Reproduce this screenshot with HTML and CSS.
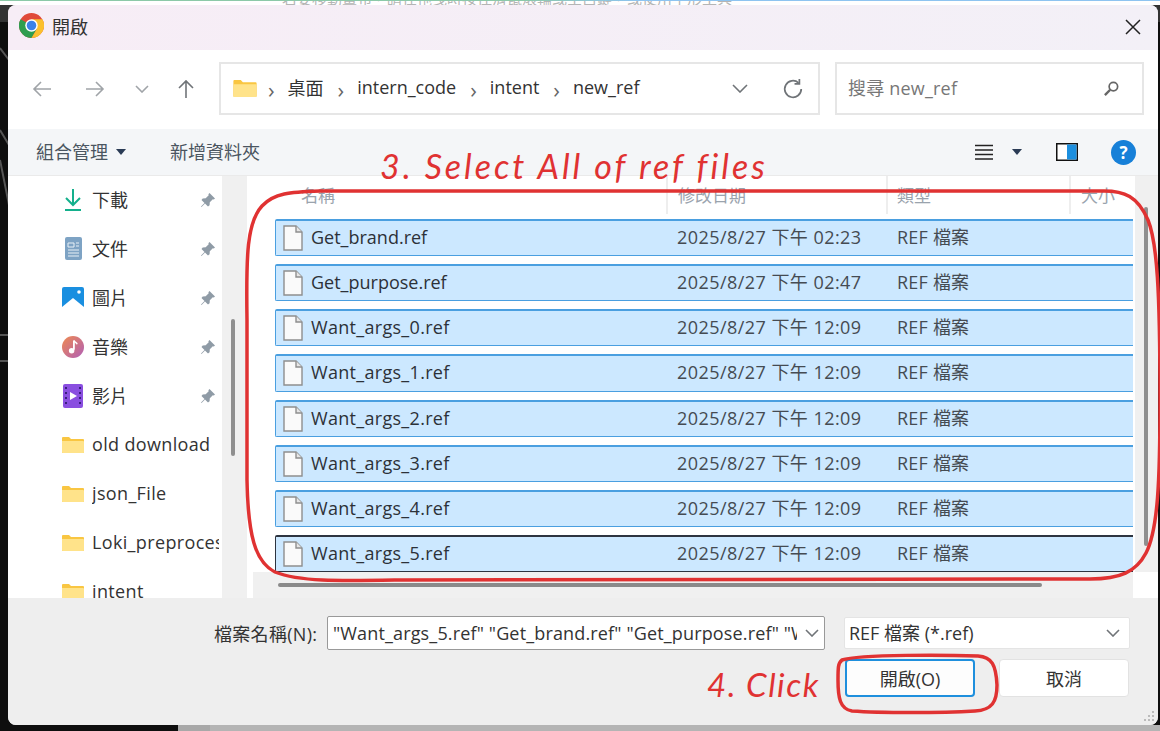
FILE: index.html
```html
<!DOCTYPE html>
<html lang="zh-Hant">
<head>
<meta charset="utf-8">
<title>開啟</title>
<link rel="stylesheet" href="styles.css">
</head>
<body>
<svg class="backdrop" viewBox="0 0 1160 731"><rect width="1160" height="22" fill="#333"/><path d="M0 48 9 60M0 130 9 145M0 160 9 205M0 335H9M0 361H9" stroke="#555" stroke-width="2" fill="none"/></svg>
<div class="desk-top"><span class="ghost">若要移動畫布，請在拖曳時按住滑鼠滾輪或空白鍵，或使用手形工具</span></div>
<main class="dialog">
  <header class="titlebar">
    <svg class="chrome" viewBox="0 0 24 24"><circle cx="12" cy="12" r="12" fill="#e04a3a"/><path d="M12 12 1.6 6A12 12 0 0 0 12 24l5.2-9z" fill="#2f9e4f"/><path d="M12 6h10.4A12 12 0 0 1 12 24l5.2-9z" fill="#fbc02d"/><circle cx="12" cy="12" r="6" fill="#fff"/><circle cx="12" cy="12" r="4.6" fill="#3b82e8"/></svg>
    <span class="title">開啟</span>
    <svg class="close" viewBox="0 0 16 16"><path d="M1 1 15 15M15 1 1 15" stroke="#222" stroke-width="1.5" fill="none"/></svg>
  </header>
  <section class="navbar">
    <div class="nav-btns">
      <svg class="nav" viewBox="0 0 20 20"><path d="M19 10H2M9 3l-7 7 7 7" class="ico-light"/></svg>
      <svg class="nav" viewBox="0 0 20 20"><path d="M1 10h17M11 3l7 7-7 7" class="ico-light"/></svg>
      <svg class="nav-small" viewBox="0 0 14 8"><path d="M1 1l6 6 6-6" class="ico-light"/></svg>
      <svg class="nav" viewBox="0 0 20 20"><path d="M10 19V2M3 9l7-7 7 7" class="ico-mid"/></svg>
    </div>
    <div class="address">
      <svg class="folder-big" viewBox="0 0 22 18"><use href="#folder"/></svg>
      <span class="sep">›</span><span class="crumb">桌面</span>
      <span class="sep">›</span><span class="crumb">intern_code</span>
      <span class="sep">›</span><span class="crumb">intent</span>
      <span class="sep">›</span><span class="crumb">new_ref</span>
      <svg class="addr-chev" viewBox="0 0 16 9"><path d="M1 1l7 7 7-7" class="ico-mid"/></svg>
      <svg class="refresh" viewBox="0 0 20 20"><path d="M17.5 10A7.5 7.5 0 1 1 15 4.4" class="ico-mid"/><path d="M15.8 1v4.4h-4.4" class="ico-mid"/></svg>
    </div>
    <div class="search">
      <span class="search-text">搜尋 new_ref</span>
      <svg class="magnifier" viewBox="0 0 18 18"><circle cx="11" cy="7" r="4.5" fill="none" stroke="#666" stroke-width="1.8"/><path d="M7.5 10.5 2 16" stroke="#666" stroke-width="2.4"/></svg>
    </div>
  </section>
  <section class="toolbar">
    <span class="tool">組合管理</span><span class="caret"></span>
    <span class="tool tool-new">新增資料夾</span>
    <div class="tool-right">
      <svg class="view" viewBox="0 0 18 16"><path d="M0 1.5h18M0 6h18M0 10.500h18M0 15h18" stroke="#222" stroke-width="1.3"/></svg>
      <span class="caret caret-blue"></span>
      <svg class="pane" viewBox="0 0 22 18"><rect x=".75" y=".75" width="20.500" height="16.500" fill="#fff" stroke="#111" stroke-width="1.5"/><rect x="11" y="1.500" width="9.500" height="15" fill="#1c8fdf"/></svg>
      <span class="help">?</span>
    </div>
  </section>
  <section class="browser">
    <aside class="sidebar">
      <div class="side-item">
        <svg class="side-ico" viewBox="0 0 22 24"><path d="M11 1v15M4 10l7 7 7-7" fill="none" stroke="#14b08c" stroke-width="2"/><path d="M3 22h16" stroke="#14b08c" stroke-width="2"/></svg>
        <span class="side-label">下載</span><svg class="pin" viewBox="0 0 16 16"><use href="#pin"/></svg>
      </div>
      <div class="side-item">
        <svg class="side-ico" viewBox="0 0 22 24"><rect x="3" y="0" width="17" height="23" rx="2" fill="#7ea3c4"/><path d="M6 6h6v4H6zM6 13h11M6 16h11M6 19h11M14 6h3M14 9h3" stroke="#e8f0f6" fill="none"/></svg>
        <span class="side-label">文件</span><svg class="pin" viewBox="0 0 16 16"><use href="#pin"/></svg>
      </div>
      <div class="side-item">
        <svg class="side-ico" viewBox="0 0 22 24"><rect y="1" width="22" height="22" rx="2" fill="#1a8fe0"/><path d="M0 21 11 12l11 9v2H0z" fill="#fff"/><circle cx="17" cy="6" r="1.800" fill="#fff"/></svg>
        <span class="side-label">圖片</span><svg class="pin" viewBox="0 0 16 16"><use href="#pin"/></svg>
      </div>
      <div class="side-item">
        <svg class="side-ico" viewBox="0 0 24 24"><defs><linearGradient id="music" x1="0" y1="0" x2="1" y2="1"><stop offset="0" stop-color="#ef8a50"/><stop offset="1" stop-color="#b05fb8"/></linearGradient></defs><circle cx="12" cy="12" r="12" fill="url(#music)"/><path d="M13 5v10" stroke="#fff" stroke-width="2"/><circle cx="10.500" cy="16" r="3" fill="#fff"/><path d="M13 5c1 2 3 2 3.500 4" stroke="#fff" stroke-width="1.500" fill="none"/></svg>
        <span class="side-label">音樂</span><svg class="pin" viewBox="0 0 16 16"><use href="#pin"/></svg>
      </div>
      <div class="side-item">
        <svg class="side-ico" viewBox="0 0 22 24"><rect x="1" y="0" width="20" height="24" rx="2" fill="#8a4fe0"/><path d="M8 8l7 4-7 4z" fill="#fff"/><path d="M4 3v18M18 3v18" stroke="#3a1f80" stroke-width="2" stroke-dasharray="2 3"/></svg>
        <span class="side-label">影片</span><svg class="pin" viewBox="0 0 16 16"><use href="#pin"/></svg>
      </div>
      <div class="side-item"><svg class="side-ico folder-ico" viewBox="0 0 22 18"><use href="#folder"/></svg><span class="side-label side-folder">old download</span></div>
      <div class="side-item"><svg class="side-ico folder-ico" viewBox="0 0 22 18"><use href="#folder"/></svg><span class="side-label side-folder">json_File</span></div>
      <div class="side-item"><svg class="side-ico folder-ico" viewBox="0 0 22 18"><use href="#folder"/></svg><span class="side-label side-folder">Loki_preprocessing</span></div>
      <div class="side-item"><svg class="side-ico folder-ico" viewBox="0 0 22 18"><use href="#folder"/></svg><span class="side-label side-folder">intent</span></div>
    </aside>
    <div class="side-scroll"><div class="side-thumb"></div></div>
    <div class="list">
      <div class="list-head">
        <span class="col col-name">名稱</span>
        <span class="col col-date">修改日期</span>
        <span class="col col-type">類型</span>
        <span class="col col-size">大小</span>
      </div>
      <div class="rows">
        <div class="row"><svg class="file" viewBox="0 0 20 26"><use href="#file"/></svg><span class="name">Get_brand.ref</span><span class="date">2025/8/27 下午 02:23</span><span class="type">REF 檔案</span></div>
        <div class="row"><svg class="file" viewBox="0 0 20 26"><use href="#file"/></svg><span class="name">Get_purpose.ref</span><span class="date">2025/8/27 下午 02:47</span><span class="type">REF 檔案</span></div>
        <div class="row"><svg class="file" viewBox="0 0 20 26"><use href="#file"/></svg><span class="name name-want">Want_args_0.ref</span><span class="date">2025/8/27 下午 12:09</span><span class="type">REF 檔案</span></div>
        <div class="row"><svg class="file" viewBox="0 0 20 26"><use href="#file"/></svg><span class="name name-want">Want_args_1.ref</span><span class="date">2025/8/27 下午 12:09</span><span class="type">REF 檔案</span></div>
        <div class="row"><svg class="file" viewBox="0 0 20 26"><use href="#file"/></svg><span class="name name-want">Want_args_2.ref</span><span class="date">2025/8/27 下午 12:09</span><span class="type">REF 檔案</span></div>
        <div class="row"><svg class="file" viewBox="0 0 20 26"><use href="#file"/></svg><span class="name name-want">Want_args_3.ref</span><span class="date">2025/8/27 下午 12:09</span><span class="type">REF 檔案</span></div>
        <div class="row"><svg class="file" viewBox="0 0 20 26"><use href="#file"/></svg><span class="name name-want">Want_args_4.ref</span><span class="date">2025/8/27 下午 12:09</span><span class="type">REF 檔案</span></div>
        <div class="row row-focus"><svg class="file" viewBox="0 0 20 26"><use href="#file"/></svg><span class="name name-want">Want_args_5.ref</span><span class="date">2025/8/27 下午 12:09</span><span class="type">REF 檔案</span></div>
      </div>
      <div class="hscroll"><div class="hthumb"></div></div>
    </div>
    <div class="vscroll"><div class="vtrack"><div class="vthumb"></div></div><div class="vcorner"></div></div>
  </section>
  <footer class="footer">
    <div class="file-line">
      <label class="file-label">檔案名稱(N):</label>
      <div class="file-input"><span class="file-value">"Want_args_5.ref" "Get_brand.ref" "Get_purpose.ref" "Want_args_0.ref"</span><svg class="chev" viewBox="0 0 14 8"><path d="M1 1l6 6 6-6" class="ico-mid"/></svg></div>
      <div class="type-select"><span>REF 檔案 (*.ref)</span><svg class="chev" viewBox="0 0 14 8"><path d="M1 1l6 6 6-6" class="ico-mid"/></svg></div>
    </div>
    <div class="btn-line">
      <button class="btn btn-primary">開啟(O)</button>
      <button class="btn btn-cancel">取消</button>
    </div>
    <svg class="grip" viewBox="0 0 14 14"><path d="M11 1h2v2h-2zM7 5h2v2H7zM11 5h2v2h-2zM3 9h2v2H3zM7 9h2v2H7zM11 9h2v2h-2z" fill="#bbb"/></svg>
  </footer>
</main>
<div class="desk-bottom"></div>

<svg class="annot-lines" viewBox="0 0 1160 731">
  <path d="M247 320C246 255 247 222 262 206C274 193 290 192 320 191L1100 191C1125 190 1138 197 1148 220C1157 242 1160 290 1160 400C1160 480 1158 530 1146 553C1136 572 1120 579 1090 579L400 580C340 581 300 582 275 572C255 562 248 535 247 480Z"/>
  <path d="M842 660C860 654 950 655 978 656C992 657 996 665 997 685C997 702 992 710 975 711C940 713 880 713 852 711C840 709 838 698 838 680C838 668 838 663 842 660Z"/>
</svg>
<div class="annot annot-select">3. Select All of ref files</div>
<div class="annot annot-click">4. Click</div>

<svg class="defs" width="0" height="0">
  <defs>
    <g id="folder"><path d="M0 2a1 1 0 0 1 1-1h6l2 2h12a1 1 0 0 1 1 1v12a1 1 0 0 1-1 1H1a1 1 0 0 1-1-1z" fill="#f9c642"/><path d="M0 5h21a1 1 0 0 1 1 1v10a1 1 0 0 1-1 1H1a1 1 0 0 1-1-1z" fill="#ffe38a"/></g>
    <path id="pin" d="M9.500 1 15 6.500l-1.200 1-1-.3-3 3-.2 3L8 14.500 5 11.500 1.500 15 1 14.500 4.500 11 1.500 8l1.200-1.600 3-.2 3-3-.3-1z" fill="#8f9ba6"/>
    <g id="file"><path d="M1 1h12l6 6v18H1z" fill="#fafafa" stroke="#8e8e8e" stroke-width="1.400"/><path d="M13 1v6h6" fill="#e6e6e6" stroke="#8e8e8e" stroke-width="1.400"/></g>
  </defs>
</svg>
</body>
</html>
```
FILE: styles.css
```css
* { box-sizing: border-box; }
html, body { margin: 0; height: 731px; overflow: hidden; }
body {
  position: relative;
  width: 1160px;
  background: #0e0e0e;
  font-family: "Open Sans", "Noto Sans CJK TC", "Noto Sans", sans-serif;
  font-size: 18px;
  color: #222;
  display: flex;
  flex-direction: column;
}
.backdrop { position: absolute; left: 0; top: 0; width: 1160px; height: 731px; }
.ico-light { fill: none; stroke: #a0a4a8; stroke-width: 1.6; }
.ico-mid { fill: none; stroke: #707478; stroke-width: 1.6; }

.desk-top {
  height: 5px;
  flex: none;
  position: relative;
  background: #fff;
  border-top: 1px solid #8cc9a8;
  border-image: linear-gradient(90deg, #8cc9a8 45%, #8ec4f0 55%) 1;
  overflow: hidden;
  text-align: center;
}
.ghost { display: block; margin: -13px 0 0 -146px; font-size: 15px; line-height: 20px; color: #b5b5b5; }

.dialog {
  flex: none;
  position: relative;
  margin-left: 8px;
  width: 1150px;
  height: 720px;
  background: #eee;
  border-radius: 8px;
  overflow: hidden;
  display: flex;
  flex-direction: column;
}
.desk-bottom {
  flex: 1;
  position: relative;
  margin-left: 178px;
  background: linear-gradient(90deg, #a8a8a8 32px, #b4b4b4 32px);
}

.titlebar {
  height: 45px;
  flex: none;
  display: flex;
  align-items: center;
  padding: 0 16px 4px 11px;
  background: linear-gradient(90deg, #f7edf6, #f3f0f7);
}
.chrome { width: 25px; height: 25px; }
.title { margin-left: 8px; font-size: 18px; color: #333; }
.close { width: 16px; height: 16px; margin: 2px 1px 0 auto; }

.navbar {
  height: 79px;
  flex: none;
  background: #fff;
  display: flex;
  align-items: flex-start;
  padding: 12px 0 0 24px;
}
.nav-btns { width: 187px; height: 53px; flex: none; display: flex; align-items: center; }
.nav { width: 20px; height: 20px; flex: none; }
.nav:nth-child(2) { margin-left: 33px; }
.nav:nth-child(4) { margin-left: 27px; }
.nav-small { width: 14px; height: 8px; margin-left: 30px; flex: none; }
.address, .search {
  height: 53px;
  flex: none;
  background: #fff;
  border: 2px solid #e6e6e6;
  display: flex;
  align-items: center;
}
.address { width: 601px; padding: 0 14px 0 12px; }
.folder-big { width: 24px; height: 19px; flex: none; margin-right: -3px; }
.sep { margin: 0 13px 0 14px; color: #666; font-size: 22px; line-height: 1; }
.crumb { font-size: 18px; color: #333; margin: 0 0 3px; }
.addr-chev { width: 16px; height: 9px; margin-left: auto; }
.refresh { width: 22px; height: 22px; margin-left: 34px; }
.search { width: 309px; margin-left: 15px; padding: 0 22px 0 11px; justify-content: space-between; }
.search-text { color: #777; margin-bottom: 3px; letter-spacing: .2px; }
.magnifier { width: 17px; height: 17px; }

.toolbar {
  height: 47px;
  flex: none;
  background: #f4f6f8;
  display: flex;
  align-items: center;
  padding: 0 22px 0 28px;
  border-bottom: 1px solid #eaeaea;
}
.tool { font-size: 18px; color: #4a5560; margin-bottom: 3px; }
.tool-new { margin-left: 44px; }
.caret { width: 0; height: 0; margin-left: 8px; border: 5px solid transparent; border-top: 6px solid #2a3b55; border-bottom: 0; }
.tool-right { margin-left: auto; display: flex; align-items: center; }
.view { width: 18px; height: 16px; }
.caret-blue { margin-left: 19px; }
.pane { width: 22px; height: 18px; margin-left: 34px; }
.help {
  width: 25px; height: 25px;
  margin-left: 33px;
  border-radius: 50%;
  background: #1780d8;
  color: #fff;
  font-weight: 700;
  font-size: 17px;
  line-height: 25px;
  text-align: center;
}

.browser { height: 422px; flex: none; display: flex; background: #fff; }
.sidebar { width: 214px; flex: none; background: #fff; overflow: hidden; }
.side-item { height: 49px; display: flex; align-items: center; padding-left: 54px; }
.side-item:first-child { margin-top: -1px; }
.side-ico { width: 22px; height: 24px; flex: none; }
.folder-ico { height: 18px; }
.side-label { margin: 0 0 2px 8px; font-size: 18px; color: #333; white-space: nowrap; }
.side-folder { letter-spacing: .35px; max-width: 127px; overflow: hidden; }
.pin { width: 16px; height: 16px; margin-left: auto; margin-right: 6px; flex: none; }
.side-scroll { width: 25px; flex: none; background: #f0f0f0; padding: 143px 0 0 9px; }
.side-thumb { width: 4px; height: 137px; background: #8f8f8f; border-radius: 2px; }

.list { width: 882px; margin-left: 6px; padding-right: 2px; flex: none; display: flex; flex-direction: column; }
.list-head {
  height: 38px;
  flex: none;
  display: flex;
  align-items: center;
  color: #9aa3ad;
  font-size: 17px;
}
.col { height: 100%; display: flex; align-items: center; border-right: 2px solid #eee; padding-bottom: 2px; }
.col-name { width: 415px; padding-left: 48px; }
.col-date { width: 220px; padding-left: 10px; }
.col-type { width: 183px; padding-left: 9px; }
.col-size { width: 62px; padding-left: 10px; border-right: 0; }
.rows { flex: 1; display: flex; flex-direction: column; gap: 8px; padding: 5px 0 0 22px; }
.row {
  height: 37.14px;
  flex: none;
  display: grid;
  grid-template-columns: 28px 366px 220px 1fr;
  align-items: center;
  background: #cce8ff;
  border: 1px solid #4a9fe0;
  border-width: 2px 0 1px 1px;
  border-radius: 2px 0 0 2px;
  padding-left: 7px;
}
.row-focus { border-color: #2d3440; }
.file { width: 20px; height: 26px; }
.name { color: #2c3138; margin-bottom: 2px; }
.name-want { letter-spacing: .3px; }
.date, .type { color: #454b52; margin-bottom: 4px; }
.date { letter-spacing: .45px; }
.type { letter-spacing: .2px; }
.hscroll { height: 26px; flex: none; background: #f0f0f0; padding: 11px 0 0 25px; }
.hthumb { width: 764px; height: 4px; background: #8a8a8a; border-radius: 2px; }
.vscroll { flex: 1; display: flex; flex-direction: column; }
.vtrack { flex: 1; background: #f0f0f0; padding: 31px 0 0 9px; }
.vcorner { height: 26px; flex: none; background: #fff; }
.vthumb { width: 4px; height: 339px; background: #8f8f8f; border-radius: 2px; }

.footer { flex: 1; position: relative; background: #eee; padding: 18px 0 0 206px; }
.file-line { display: flex; align-items: center; }
.file-label { width: 113px; font-size: 18px; letter-spacing: .3px; color: #333; white-space: nowrap; }
.file-input, .type-select {
  background: #fff;
  display: flex;
  align-items: center;
  border-radius: 2px;
  white-space: nowrap;
  overflow: hidden;
  font-size: 18px;
  color: #333;
}
.file-input { width: 498px; height: 34px; border: 1px solid #999; padding: 0 5px; }
.file-value { width: 464px; overflow: hidden; flex: none; letter-spacing: .15px; margin-bottom: 1px; }
.type-select { width: 286px; height: 32px; margin-left: 19px; padding: 0 9px 0 4px; border: 1px solid #e4e4e4; justify-content: space-between; }
.type-select span { margin-bottom: 2px; }
.chev { width: 14px; height: 8px; flex: none; margin-left: auto; }
.btn-line { display: flex; margin: 9px 0 0 631px; }
.btn {
  width: 130px;
  height: 38px;
  border-radius: 4px;
  background: #fff;
  font: inherit;
  font-size: 18px;
  color: #333;
  padding: 0 0 1px;
}
.btn-primary { border: 2px solid #1e8fdd; background: #fdfdfd; }
.btn-cancel { margin-left: 24px; border: 1px solid #e2e2e2; }
.grip { position: absolute; right: 3px; bottom: 1px; width: 14px; height: 14px; }

.annot-lines { position: absolute; left: 0; top: 0; width: 1160px; height: 731px; pointer-events: none; }
.annot-lines path { fill: none; stroke: #e03232; stroke-width: 3.5; }
.annot {
  position: absolute;
  color: #e03232;
  font-family: "Lato", sans-serif;
  font-style: italic;
  line-height: 36px;
  white-space: nowrap;
}
.annot-select { left: 380px; top: 148px; font-size: 34px; letter-spacing: 3px; }
.annot-click { left: 707px; top: 666px; font-size: 33px; letter-spacing: 1.5px; }
.defs { position: absolute; }
```
